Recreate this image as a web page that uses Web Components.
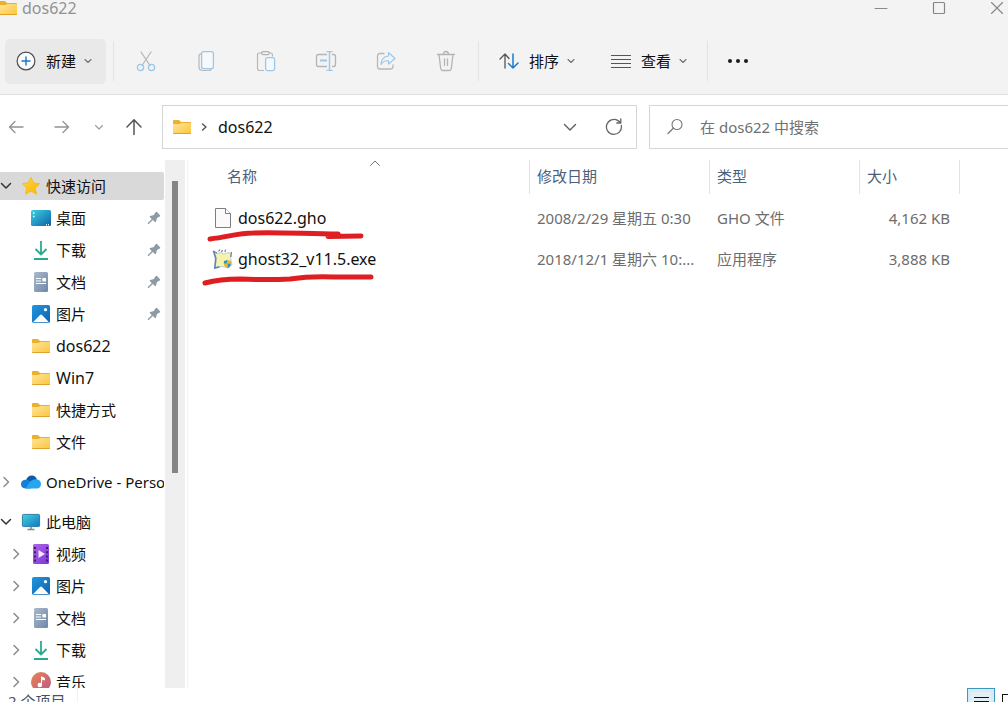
<!DOCTYPE html>
<html lang="zh-CN">
<head>
<meta charset="utf-8">
<title>dos622</title>
<style>
  html, body { margin: 0; height: 100%; }
  body {
    font: 15px/20px "Noto Sans", "Noto Sans CJK SC", sans-serif;
    color: #111; background: #fff; overflow: hidden;
  }
</style>
</head>
<body>
<explorer-window></explorer-window>

<script>
const define = (name, html, setup) => {
  const template = document.createElement('template');
  template.innerHTML = `<style>
    * { box-sizing: border-box; }
    button { font: inherit; color: inherit; background: none; border: 0; margin: 0; padding: 0;
      display: flex; align-items: center; justify-content: center; }
    a { color: inherit; text-decoration: none; }
  </style>` + html;
  customElements.define(name, class extends HTMLElement {
    constructor() {
      super();
      this.attachShadow({ mode: 'open' }).append(template.content.cloneNode(true));
    }
    connectedCallback() { if (setup) setup(this, this.shadowRoot); }
  });
};

/* [width, height, markup] */
const folder = [18, 16, `<defs><linearGradient id="f" x1="0" y1="0" x2="1" y2="1"><stop stop-color="#ffe49a"/><stop offset="1" stop-color="#fcc63d"/></linearGradient></defs>
  <path d="M0 2q0-1 1-1h5l2 2h9q1 0 1 1v4H0z" fill="#eab12d"/><path d="M0 5h7l1-1h9q1 0 1 1v9q0 1-1 1H1q-1 0-1-1z" fill="url(#f)"/><path d="M0 14h18q0 1-1 1H1q-1 0-1-1z" fill="#dfa229"/>`];
const line = (w, h, d, color = '#666', sw = 1.2) =>
  [w, h, `<path d="${d}" fill="none" stroke="${color}" stroke-width="${sw}" stroke-linecap="round" stroke-linejoin="round"/>`];
const ICONS = {
  folder,
  min: line(14, 14, 'M1 7.5h12', '#8b8b8b', 1),
  max: [14, 14, '<rect x="1.5" y="1.5" width="11" height="11" rx="1" fill="none" stroke="#858585" stroke-width="1.2"/>'],
  close: line(14, 14, 'M1.5 1.5l11 11M12.500 1.5l-11 11', '#858585', 1.1),
  plus: [20, 20, '<circle cx="10" cy="10" r="8.9" fill="#fafafa" stroke="#4b4b4b" stroke-width="1.2"/><path d="M10 6v8M6 10h8" stroke="#1877c9" stroke-width="1.4" stroke-linecap="round"/>'],
  smallDown: line(8, 8, 'M1 2.500l3 3 3-3', '#707070', 1.1),
  down: line(14, 14, 'M1.500 4.500L7 10l5.500-5.500', '#5c5c5c', 1.4),
  navDown: line(10, 10, 'M1.500 3.500L5 7l3.500-3.500', '#9a9a9a', 1.1),
  treeDown: line(12, 12, 'M1.500 3.500L6 8l4.500-4.500', '#333', 1.5),
  treeRight: line(12, 12, 'M4 1.500L8.500 6 4 10.500', '#8b8b8b', 1.5),
  crumb: line(8, 10, 'M2.500 2L6 5 2.500 8', '#555', 1.5),
  sortUp: line(10, 6, 'M.5 5.500L5 1l4.500 4.500', '#777', 1),
  back: line(16, 14, 'M15 7H1.500M7 1.500L1.500 7 7 12.500', '#929292', 1.3),
  forward: line(16, 14, 'M1 7h13.500M9 1.500L14.500 7 9 12.500', '#929292', 1.3),
  up: line(18, 18, 'M9 16.500V2M2 9l7-7.300L16 9', '#555', 1.5),
  refresh: line(18, 18, 'M16.300 7.500A7.500 7.500 0 1 1 13 2.600l2.500 1.800M15.800 1v4h-4', '#666', 1.3),
  search: [16, 18, '<circle cx="10" cy="6.500" r="5" fill="none" stroke="#777" stroke-width="1.100"/><path d="M6.500 10L1 15.500" stroke="#777" stroke-width="1.200" stroke-linecap="round"/>'],
  cut: [20, 22, '<path d="M5 2l9 13.500M15 2L6 15.500" stroke="#b4b4b4" stroke-width="1.200" stroke-linecap="round"/><g fill="none" stroke="#9cc8ea" stroke-width="1.300"><circle cx="4.500" cy="17.500" r="3.100"/><circle cx="15.500" cy="17.500" r="3.100"/></g>'],
  copy: [18, 22, '<path d="M4.500 3.500Q2 4 2 6v10.500Q2 20.500 6 20.500h6q2 0 2.500-1.500" fill="none" stroke="#b8b8b8" stroke-width="1.200"/><rect x="4.600" y="1.600" width="11.800" height="17" rx="2" fill="#f5f9fc" stroke="#9cc8ea" stroke-width="1.300"/>'],
  paste: [20, 22, '<path d="M8 20.500H3.500q-2 0-2-2V5q0-2 2-2H6M13 3h1.500q2 0 2 2v1.500" fill="none" stroke="#b8b8b8" stroke-width="1.200"/><rect x="5.600" y="1.600" width="7.800" height="3" rx="1.500" fill="none" stroke="#b0b0b0" stroke-width="1.200"/><rect x="9.600" y="7.600" width="9" height="13" rx="1.800" fill="#f5f9fc" stroke="#9cc8ea" stroke-width="1.300"/>'],
  rename: [22, 22, '<path d="M12 4.500H3.500q-2 0-2 2v8q0 2 2 2H12M17 4.500h1.500q2 0 2 2v8q0 2-2 2H17" fill="none" stroke="#b4b4b4" stroke-width="1.300"/><path d="M5 10.500h7" stroke="#9cc8ea" stroke-width="2"/><path d="M12 1.600h5M12 20.400h5M14.500 1.600v18.800" fill="none" stroke="#9cc8ea" stroke-width="1.400" stroke-linecap="round"/>'],
  share: [20, 20, '<path d="M8 2.500H4q-2.500 0-2.500 2.500v10.500Q1.500 18 4 18h10.500q2.500 0 2.500-2.500V14" fill="none" stroke="#b8b8b8" stroke-width="1.300" stroke-linecap="round"/><path d="M12.500 1.500l6.500 6-6.500 5.500v-3.200q-5-.6-7.500 3.700Q5.500 5.500 12.500 5z" fill="none" stroke="#9cc8ea" stroke-width="1.200" stroke-linejoin="round"/>'],
  trash: [20, 22, '<path d="M1.500 4.500h17M3 4.500l1.700 14q.3 2 2 2h6.600q1.700 0 2-2l1.700-14M7.500 4.500q0-3 2.500-3t2.500 3M8.500 9v6.500M11.500 9v6.500" fill="none" stroke="#b4b4b4" stroke-width="1.300" stroke-linecap="round"/>'],
  sort: [20, 18, '<path d="M6 16V2M1 7l5-5 4 4.500" fill="none" stroke="#555" stroke-width="1.300" stroke-linecap="round" stroke-linejoin="round"/><path d="M14 2v14M9.500 11.500L14 16l5-5" fill="none" stroke="#1c7bd0" stroke-width="1.500" stroke-linecap="round" stroke-linejoin="round"/>'],
  view: [20, 16, '<path d="M0 2.500h20M0 6.500h20M0 10.500h20M0 14.500h20" stroke="#555" stroke-width="1.200"/>'],
  more: [22, 6, '<g fill="#1c1c1c"><circle cx="3" cy="3" r="2"/><circle cx="11" cy="3" r="2"/><circle cx="19" cy="3" r="2"/></g>'],
  star: [20, 20, '<defs><linearGradient id="s" x2="1" y2="1"><stop stop-color="#ffd84a"/><stop offset="1" stop-color="#f9b400"/></linearGradient></defs><path d="M10 1.300l2.700 5.600 6 .8-4.400 4.200 1.100 6.200L10 15.200l-5.400 2.900 1.100-6.200L1.300 7.700l6-.8z" fill="url(#s)" stroke="#f9bd16" stroke-linejoin="round"/>'],
  desktop: [20, 16, '<defs><linearGradient id="d" x2="1" y2="1"><stop stop-color="#3fd0e0"/><stop offset="1" stop-color="#0b62a8"/></linearGradient></defs><rect width="20" height="16" rx="1.500" fill="url(#d)"/><path d="M2 3h1.500M2 6.500h1.500M15 14.800h1M17 14.800h1" stroke="#e8fbff" stroke-width="1.500"/>'],
  download: [20, 20, '<path d="M10 1v13M4.500 9l5.500 5.500L15.500 9M3 19h14" fill="none" stroke="#27ab8f" stroke-width="1.800"/>'],
  doc: [16, 20, '<defs><linearGradient id="o" x2="1" y2="1"><stop stop-color="#a9bace"/><stop offset="1" stop-color="#6f87a6"/></linearGradient></defs><rect x="1" width="14" height="20" rx="1.500" fill="url(#o)"/><path d="M3 6.500h5M3 9h5M3 11.500h10M9.500 7.800h3.500" stroke="#fff" stroke-width="1.200"/><path d="M9.500 6h3.500v3.500H9.500z" fill="#fff"/>'],
  picture: [18, 18, '<defs><linearGradient id="p" x2="1" y2="1"><stop stop-color="#2396de"/><stop offset="1" stop-color="#0c63b4"/></linearGradient></defs><rect width="18" height="18" rx="1.800" fill="url(#p)"/><path d="M1 17.200L8 10q1-1 2 0l7 7.200z" fill="#fff"/><circle cx="13.500" cy="4.700" r="1.600" fill="#fff"/>'],
  cloud: [20, 14, '<path d="M5 6Q6 .5 11 .5q3.500 0 5 4L9 9z" fill="#0b5cad"/><path d="M4.500 13.500Q0 13 0 9.200 0 5.500 4 4.700q2.500-.3 4.500 1l7 5-6 2.800z" fill="#1180d6"/><path d="M8 8q3-4 7.500-3.700Q19.800 5 20 9q-.2 4.300-4 4.500H4.500q2-2.500 3.500-5.500z" fill="#28a5ef"/>'],
  pc: [20, 18, '<defs><linearGradient id="m" x2="1" y2="1"><stop stop-color="#43d4de"/><stop offset="1" stop-color="#1178c0"/></linearGradient></defs><rect x="1.400" y="1.400" width="17.200" height="12.200" rx="1" fill="url(#m)" stroke="#1c6793" stroke-width=".8"/><path d="M10 14v2.500M6.500 16.500h7" stroke="#7e8a94" stroke-width="1.500"/>'],
  video: [16, 20, '<defs><linearGradient id="v" x2="1" y2="1"><stop stop-color="#b163e6"/><stop offset="1" stop-color="#7c36d6"/></linearGradient></defs><rect width="16" height="20" rx="1.500" fill="url(#v)"/><path d="M2 3v15M14 3v15" stroke="#3e1c72" stroke-width="2" stroke-dasharray="2 2.200"/><path d="M5.500 6l6.500 4-6.500 4z" fill="#f1e7fb"/>'],
  music: [20, 20, '<defs><linearGradient id="u" x2="1" y2="1"><stop stop-color="#e8854f"/><stop offset="1" stop-color="#b9578f"/></linearGradient></defs><circle cx="10" cy="10" r="10" fill="url(#u)"/><path d="M10.500 13V4.800l3 1.500V8l-2-.8" fill="#fff" stroke="#fff" stroke-width="1"/><circle cx="8.800" cy="13" r="2.300" fill="#fff"/>'],
  pin: [14, 14, '<path d="M8.500 1.200q.8-.8 1.600 0l2.800 2.800q.8.900-.2 1.500L10 6.900 9 10.500q-.5 1-1.300.2L5.800 8.900 1.500 13.200l-.9-.9L4.800 8 2.900 6.200q-.7-.8.3-1.300L6.900 4z" fill="#8f9aa3"/>'],
  file: [18, 20, '<path d="M1.500.5h10l5 5v14h-15z" fill="#fafafa" stroke="#7e7e7e"/><path d="M11.500.5v5h5" fill="#fff" stroke="#7e7e7e"/>'],
  ghost: [22, 20, '<path d="M2 3.500l3 1 4-1 3 1.500 4-1.500 3.500 1-.8 5L20 16l-4 2.500-7-1-6 2 1-7z" fill="#f7f3ac" stroke="#a9c3d6" stroke-width=".8"/><path d="M1.500 2l2.300 7-1 10 4.700-1.300" fill="none" stroke="#5c86c2" stroke-width="1.600"/><path d="M1 2l4 2M6.500 2.500l1.500-2M9.500 3l1-2M13 3l.5-2.500M19.500 3l-.8 5" fill="none" stroke="#6c80a4" stroke-width="1.200"/><path d="M12 12q2-.2 3.500-1.200v4h-3.700z" fill="#2f93c4"/><path d="M15.500 10.800q1.500 1 3.500 1.200v3h-3.500z" fill="#eab72e"/><path d="M11.800 14.800h3.700v4.500q-3.200-1-3.700-4.500z" fill="#eab72e"/><path d="M15.500 14.800H19q-.5 3.500-3.500 4.500z" fill="#2f93c4"/>'],
  details: [28, 24, '<rect x=".5" y=".5" width="27" height="23" fill="#d3ecf8" stroke="#3d97bf"/><path d="M4 4h20v20H4z" fill="#e3eff5"/><path d="M7 9.500h15M7 13.500h15" stroke="#111"/>'],
  tiles: [16, 20, '<rect x="1.500" y=".5" width="13" height="12" fill="#fff" stroke="#111"/>']
};
define('app-icon', '<style>:host{display:inline-flex;flex:none} svg{display:block}</style>', (host, root) => {
  const [w, h, body] = ICONS[host.getAttribute('name')];
  const holder = document.createElement('template');
  holder.innerHTML = `<svg width="${w}" height="${h}" viewBox="0 0 ${w} ${h}" aria-hidden="true">${body}</svg>`;
  root.append(holder.content);
});

define('title-bar', `<style>
  :host { display: flex; height: 28px; justify-content: space-between; background: #f3f3f3; overflow: hidden; }
  .name { display: flex; align-items: center; gap: 5px; height: 16px; margin-left: -1px; color: #929292; font-size: 16px; }
  .controls { display: flex; height: 16px; margin-right: -18px; }
  button { width: 58px; }
</style>
<div class="name"><app-icon name="folder"></app-icon><slot></slot></div>
<div class="controls">
  <button aria-label="最小化"><app-icon name="min"></app-icon></button>
  <button aria-label="最大化"><app-icon name="max"></app-icon></button>
  <button aria-label="关闭"><app-icon name="close"></app-icon></button>
</div>`);

define('command-bar', `<style>
  :host { display: flex; align-items: center; height: 67px; background: #f3f3f3; border-bottom: 1px solid #dfdfdf; padding-left: 5px; }
  .new { width: 101px; height: 45px; gap: 10px; padding-left: 11px; justify-content: flex-start; border-radius: 5px; background: #e9e9e9; margin-right: 5px; }
  .new app-icon:last-child, .menu app-icon:last-child { margin-left: -2px; }
  i { width: 1px; height: 40px; margin: 0 2px; background: #e3e3e3; }
  .tool { width: 60px; height: 44px; }
  .menu { height: 44px; gap: 10px; padding: 0 18px; }
  .more { width: 56px; height: 44px; }
</style>
<button class="new"><app-icon name="plus"></app-icon>新建<app-icon name="smallDown"></app-icon></button><i></i>
<button class="tool" aria-label="剪切" disabled><app-icon name="cut"></app-icon></button>
<button class="tool" aria-label="复制" disabled><app-icon name="copy"></app-icon></button>
<button class="tool" aria-label="粘贴" disabled><app-icon name="paste"></app-icon></button>
<button class="tool" aria-label="重命名" disabled><app-icon name="rename"></app-icon></button>
<button class="tool" aria-label="共享" disabled><app-icon name="share"></app-icon></button>
<button class="tool" aria-label="删除" disabled><app-icon name="trash"></app-icon></button><i></i>
<button class="menu"><app-icon name="sort"></app-icon>排序<app-icon name="smallDown"></app-icon></button>
<button class="menu"><app-icon name="view"></app-icon>查看<app-icon name="smallDown"></app-icon></button><i></i>
<button class="more" aria-label="更多"><app-icon name="more"></app-icon></button>`);

define('address-row', `<style>
  :host { display: flex; padding: 10px 0 11px; }
  nav { display: grid; grid-template-columns: 32px 60px 14px 56px; flex: none; }
  .fields { flex: 1; min-width: 0; display: grid; grid-template-columns: minmax(0, 475fr) minmax(0, 359fr); gap: 12px; }
  .address, .search { display: flex; align-items: center; height: 44px; border: 1px solid #d6d6d6; min-width: 0; }
  .address { padding-left: 10px; }
  .address > app-icon + app-icon { margin: 0 10px 0 9px; }
  .address a { flex: 1; font-size: 16px; }
  .address button { width: 44px; height: 42px; }
  .search { border-right: 0; padding-left: 17px; gap: 17px; }
  input { flex: 1; min-width: 0; border: 0; outline: 0; padding: 0; font: inherit; background: none; }
  input::placeholder { color: #707070; opacity: 1; }
</style>
<nav>
  <button aria-label="后退"><app-icon name="back"></app-icon></button>
  <button aria-label="前进"><app-icon name="forward"></app-icon></button>
  <button aria-label="最近位置"><app-icon name="navDown"></app-icon></button>
  <button aria-label="上移"><app-icon name="up"></app-icon></button>
</nav>
<div class="fields">
  <div class="address"><app-icon name="folder"></app-icon><app-icon name="crumb"></app-icon><a href="#dos622">dos622</a>
    <button aria-label="以前的位置"><app-icon name="down"></app-icon></button>
    <button aria-label="刷新"><app-icon name="refresh"></app-icon></button>
  </div>
  <label class="search"><app-icon name="search"></app-icon><input type="text" placeholder="在 dos622 中搜索" aria-label="在 dos622 中搜索"></label>
</div>`);

define('nav-item', `<style>
  :host { display: block; padding: 2px 1px 2px 0; }
  a { display: flex; align-items: center; height: 28px; padding-right: 3px; border-radius: 0 2px 2px 0; overflow: hidden; white-space: nowrap; }
  :host([child]) a { padding-left: 10px; }
  :host([selected]) a { background: #d9d9d9; }
  :host([latin]) { font-size: 16px; }
  .chevron { width: 12px; margin-right: 9px; display: flex; flex: none; }
  .icon { width: 20px; margin-right: 5px; display: flex; justify-content: center; flex: none; }
  .label { flex: 1 0 auto; }
</style>
<a href="#"><span class="chevron"></span><span class="icon"></span><span class="label"><slot></slot></span></a>`, (host, root) => {
  const add = (parent, name) => {
    const icon = document.createElement('app-icon');
    icon.setAttribute('name', name);
    parent.append(icon);
  };
  add(root.querySelector('.icon'), host.getAttribute('icon'));
  if (host.hasAttribute('chevron')) add(root.querySelector('.chevron'), host.getAttribute('chevron'));
  if (host.hasAttribute('pinned')) add(root.querySelector('a'), 'pin');
});

define('nav-pane', `<style>
  :host { display: flex; flex: none; width: 188px; min-height: 0; overflow: hidden; border-right: 1px solid #f3f3f3; }
  .tree { width: 165px; padding-top: 10px; display: flex; flex-direction: column; gap: 8px; overflow: hidden; }
  .bar { width: 20px; background: #efefef; padding: 21px 7px 0; }
  .thumb { height: 292px; background: #858585; }
</style>
<nav class="tree">
  <section>
    <nav-item icon="star" chevron="treeDown" selected>快速访问</nav-item>
    <nav-item child icon="desktop" pinned>桌面</nav-item>
    <nav-item child icon="download" pinned>下载</nav-item>
    <nav-item child icon="doc" pinned>文档</nav-item>
    <nav-item child icon="picture" pinned>图片</nav-item>
    <nav-item child icon="folder" latin>dos622</nav-item>
    <nav-item child icon="folder" latin>Win7</nav-item>
    <nav-item child icon="folder">快捷方式</nav-item>
    <nav-item child icon="folder">文件</nav-item>
  </section>
  <section><nav-item icon="cloud" chevron="treeRight">OneDrive - Personal</nav-item></section>
  <section>
    <nav-item icon="pc" chevron="treeDown">此电脑</nav-item>
    <nav-item child icon="video" chevron="treeRight">视频</nav-item>
    <nav-item child icon="picture" chevron="treeRight">图片</nav-item>
    <nav-item child icon="doc" chevron="treeRight">文档</nav-item>
    <nav-item child icon="download" chevron="treeRight">下载</nav-item>
    <nav-item child icon="music" chevron="treeRight">音乐</nav-item>
  </section>
</nav>
<div class="bar"><div class="thumb"></div></div>`);

define('file-list', `<style>
  :host { display: block; flex: 1; min-width: 0; position: relative; overflow: hidden; }
  table { border-collapse: separate; border-spacing: 0; table-layout: fixed; width: 100%; max-width: 772px; }
  th { height: 34px; padding: 0 7px 2px; text-align: left; font-weight: 400; color: #4c607a; border-right: 1px solid #e3e3e3; position: relative; }
  th:first-child { padding-left: 39px; }
  th app-icon { position: absolute; left: 182px; top: 0; }
  tbody::before { content: ""; display: block; height: 4px; }
  td { height: 41px; padding: 0 7px 2px; color: #6d6d6d; white-space: nowrap; }
  td:first-child { padding-left: 24px; color: #111; font-size: 16px; }
  td:nth-child(4) { text-align: right; padding-right: 10px; }
  .file { display: flex; align-items: center; gap: 4px; }
  .file span { width: 22px; display: flex; justify-content: center; }
  .ink { position: absolute; left: 0; top: 60px; pointer-events: none; }
</style>
<table>
  <colgroup><col style="width:342px"><col style="width:180px"><col style="width:150px"><col style="width:100px"></colgroup>
  <thead><tr><th>名称<app-icon name="sortUp"></app-icon></th><th>修改日期</th><th>类型</th><th>大小</th></tr></thead>
  <tbody>
    <tr><td><a class="file" href="#gho"><span><app-icon name="file"></app-icon></span>dos622.gho</a></td><td>2008/2/29 星期五 0:30</td><td>GHO 文件</td><td>4,162 KB</td></tr>
    <tr><td><a class="file" href="#exe"><span><app-icon name="ghost"></app-icon></span>ghost32_v11.5.exe</a></td><td>2018/12/1 星期六 10:...</td><td>应用程序</td><td>3,888 KB</td></tr>
  </tbody>
</table>
<svg class="ink" width="200" height="80" viewBox="0 60 200 80" aria-hidden="true">
  <g fill="none" stroke="#df1e22" stroke-width="5" stroke-linecap="round" stroke-linejoin="round">
    <path d="M22 79C40 77 50 73 65 73C90 72 120 74 150 74M140 76.500L173 76"/>
    <path d="M17 123Q32 119 52 119Q80 120 102 119Q122 116 146 117L183 117"/>
  </g>
</svg>`);

define('status-bar', `<style>
  :host { display: flex; justify-content: space-between; height: 14px; overflow: hidden; color: #44546a; }
  .count { padding: 3px 12px 0 8px; border-right: 1px solid #f0f0f0; height: 24px; }
  .modes { display: flex; gap: 6px; margin-right: -9px; align-items: flex-start; }
  button + button { padding-top: 6px; }
</style>
<div class="count">2 个项目</div>
<div class="modes">
  <button aria-label="详细信息"><app-icon name="details"></app-icon></button>
  <button aria-label="大缩略图"><app-icon name="tiles"></app-icon></button>
</div>`);

define('explorer-window', `<style>
  :host { display: flex; flex-direction: column; height: 100vh; overflow: hidden; }
  title-bar, command-bar, address-row, status-bar { flex: none; }
  main { display: flex; flex: 1; min-height: 0; }
</style>
<title-bar>dos622</title-bar>
<command-bar></command-bar>
<address-row></address-row>
<main><nav-pane></nav-pane><file-list></file-list></main>
<status-bar></status-bar>`);
</script>
</body>
</html>
